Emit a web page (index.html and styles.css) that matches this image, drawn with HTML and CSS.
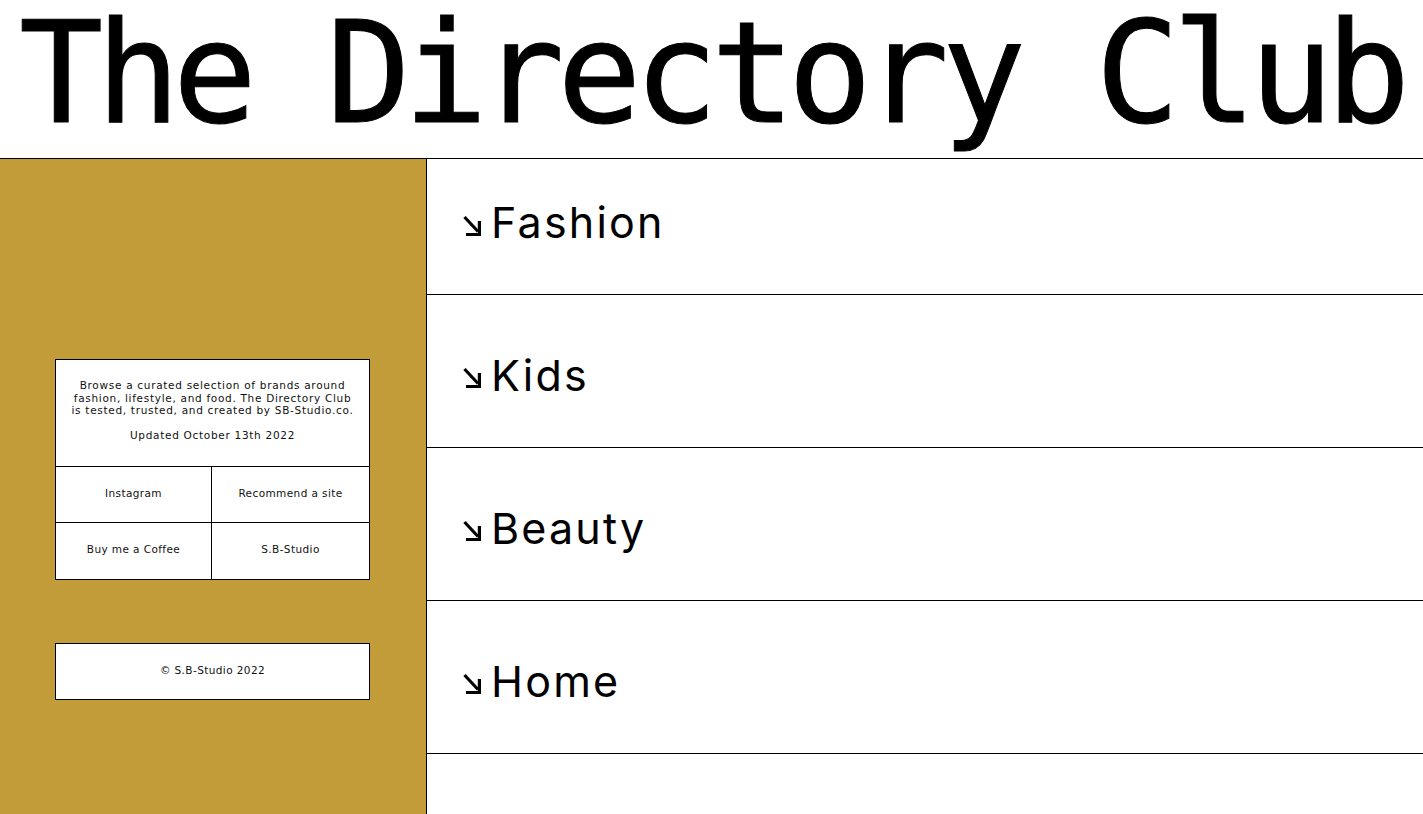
FILE: index.html
```html
<!DOCTYPE html>
<html lang="en">
<head>
<meta charset="utf-8">
<title>The Directory Club</title>
<link rel="stylesheet" href="styles.css">
</head>
<body>
<header class="site-header">
  <h1 class="title">The Directory Club</h1>
</header>
<main class="layout">
  <aside class="sidebar">
    <div class="info-box">
      <div class="info-text">
        <p>Browse a curated selection of brands around fashion, lifestyle, and food. The Directory Club is tested, trusted, and created by SB-Studio.co.</p>
        <p>Updated October 13th 2022</p>
      </div>
      <div class="links">
        <a class="link-cell" href="#">Instagram</a>
        <a class="link-cell" href="#">Recommend a site</a>
        <a class="link-cell" href="#">Buy me a Coffee</a>
        <a class="link-cell" href="#">S.B-Studio</a>
      </div>
    </div>
    <div class="footer-box">© S.B-Studio 2022</div>
  </aside>
  <section class="categories">
    <a class="category category-first" href="#">
      <svg class="arrow" viewBox="0 0 18 22" width="18" height="22"><path d="M1.5 2 L15 16.5" /><path d="M3 19.5 H16.4 V6" /></svg>
      <span class="cat-name">Fashion</span>
    </a>
    <a class="category" href="#">
      <svg class="arrow" viewBox="0 0 18 22" width="18" height="22"><path d="M1.5 2 L15 16.5" /><path d="M3 19.5 H16.4 V6" /></svg>
      <span class="cat-name">Kids</span>
    </a>
    <a class="category" href="#">
      <svg class="arrow" viewBox="0 0 18 22" width="18" height="22"><path d="M1.5 2 L15 16.5" /><path d="M3 19.5 H16.4 V6" /></svg>
      <span class="cat-name">Beauty</span>
    </a>
    <a class="category" href="#">
      <svg class="arrow" viewBox="0 0 18 22" width="18" height="22"><path d="M1.5 2 L15 16.5" /><path d="M3 19.5 H16.4 V6" /></svg>
      <span class="cat-name">Home</span>
    </a>
    <div class="category category-last"></div>
  </section>
</main>
</body>
</html>
```
FILE: styles.css
```css
* { box-sizing: border-box; }
html, body { margin: 0; padding: 0; background: #fff; color: #000; }
body { font-family: "DejaVu Sans", sans-serif; height: 814px; overflow: hidden; }
a { color: inherit; text-decoration: none; }

.site-header {
  display: flow-root;
  height: 159px;
  border-bottom: 1px solid #000;
  padding: 4px 0 0 19px;
}
.title {
  margin: 0;
  font-family: "DejaVu Sans Mono", monospace;
  font-weight: normal;
  font-size: 140px;
  line-height: 140px;
  letter-spacing: -7.4px;
  white-space: nowrap;
  -webkit-text-stroke: 1px #000;
}

.layout {
  display: grid;
  grid-template-columns: 427px 1fr;
  height: 655px;
}

.sidebar {
  background: #c29c38;
  border-right: 1px solid #000;
  padding: 200px 0 0 55px;
}

.info-box {
  width: 315px;
  background: #fff;
  border: 1px solid #000;
}
.info-text {
  padding: 19px 13px 24px;
  text-align: center;
  font-size: 10.5px;
  line-height: 12.6px;
  letter-spacing: 0.7px;
  color: #111;
}
.info-text p { margin: 0; }
.info-text p + p { margin-top: 12.6px; }

.links {
  display: grid;
  grid-template-columns: 156px 1fr;
  border-top: 1px solid #000;
}
.link-cell {
  height: 56px;
  display: flex;
  align-items: center;
  justify-content: center;
  padding-bottom: 3px;
  font-size: 10.5px;
  letter-spacing: 0.4px;
  color: #111;
}
.link-cell:nth-child(odd) { border-right: 1px solid #000; }
.link-cell:nth-child(-n+2) { border-bottom: 1px solid #000; }

.footer-box {
  width: 315px;
  height: 57px;
  margin-top: 63px;
  background: #fff;
  border: 1px solid #000;
  display: flex;
  align-items: center;
  justify-content: center;
  padding-bottom: 3px;
  font-size: 10.5px;
  letter-spacing: 0.4px;
  color: #111;
}

.categories {
  display: flex;
  flex-direction: column;
  overflow: hidden;
}
.category {
  height: 153px;
  flex: 0 0 auto;
  border-bottom: 1px solid #000;
  display: flex;
  align-items: center;
  padding: 8px 0 0 36px;
  gap: 10px;
}
.category-first {
  height: 136px;
  padding: 0 0 8px 36px;
}
.category-last {
  height: 60px;
  border-bottom: none;
}
.arrow {
  fill: none;
  stroke: #000;
  stroke-width: 3.2;
  margin-top: 6px;
}
.cat-name {
  font-family: "Inter", sans-serif;
  font-size: 43px;
  line-height: 1;
  letter-spacing: 2.2px;
}
```
